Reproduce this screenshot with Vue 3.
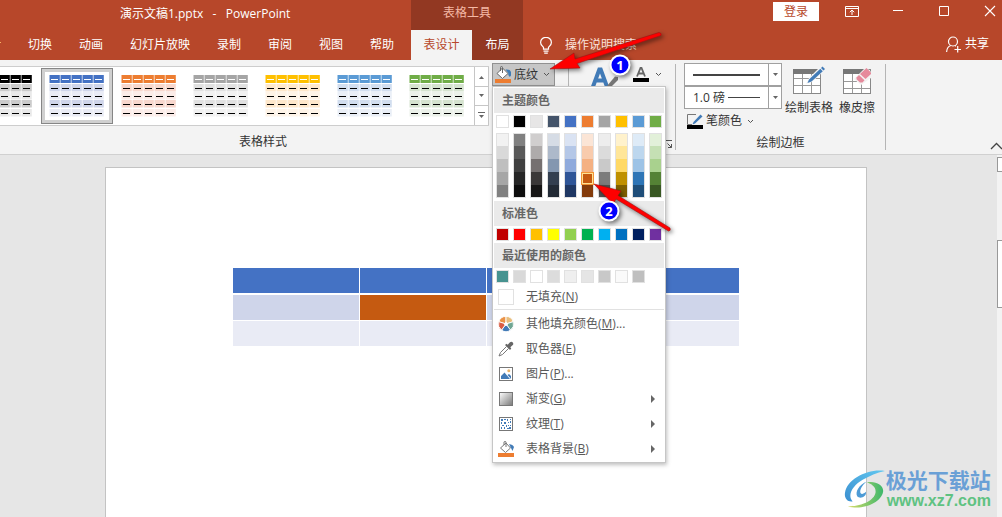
<script setup>
const tabs = ['设计', '切换', '动画', '幻灯片放映', '录制', '审阅', '视图', '帮助']

const tableStyles = [
  { name: '黑色', head: '#000000', odd: '#cbcbcb', even: '#e9e9e9' },
  { name: '蓝色', head: '#4472c4', odd: '#cfd5ea', even: '#e9ebf5', selected: true },
  { name: '橙色', head: '#ed7d31', odd: '#f8d7cd', even: '#fcece8' },
  { name: '灰色', head: '#a5a5a5', odd: '#e1e1e1', even: '#f1f1f1' },
  { name: '金色', head: '#ffc000', odd: '#ffe8cb', even: '#fff4e7' },
  { name: '浅蓝', head: '#5b9bd5', odd: '#d2deef', even: '#eaeff7' },
  { name: '绿色', head: '#70ad47', odd: '#d5e3cf', even: '#ebf1e9' },
]
const cellRows = [9, 17, 25, 34]

const themeColors = [
  { base: '#ffffff', tints: ['#f2f2f2', '#d9d9d9', '#bfbfbf', '#a6a6a6', '#808080'] },
  { base: '#000000', tints: ['#808080', '#595959', '#404040', '#262626', '#0d0d0d'] },
  { base: '#e7e6e6', tints: ['#d0cece', '#aeabab', '#757070', '#3b3838', '#171616'] },
  { base: '#44546a', tints: ['#d6dce5', '#adb9ca', '#8497b0', '#333f50', '#222a35'] },
  { base: '#4472c4', tints: ['#dae3f3', '#b4c7e7', '#8faadc', '#2f5597', '#203864'] },
  { base: '#ed7d31', tints: ['#fbe5d6', '#f8cbad', '#f4b183', '#c55a11', '#843c0c'] },
  { base: '#a5a5a5', tints: ['#ededed', '#dbdbdb', '#c9c9c9', '#7c7c7c', '#525252'] },
  { base: '#ffc000', tints: ['#fff2cc', '#ffe699', '#ffd966', '#bf9000', '#7f6000'] },
  { base: '#5b9bd5', tints: ['#deebf7', '#bdd7ee', '#9dc3e6', '#2e75b6', '#1f4e79'] },
  { base: '#70ad47', tints: ['#e2f0d9', '#c5e0b4', '#a9d18e', '#548235', '#385723'] },
]
const activeColor = '#c55a11'
const standardColors = ['#c00000', '#ff0000', '#ffc000', '#ffff00', '#92d050', '#00b050', '#00b0f0', '#0070c0', '#002060', '#7030a0']
const recentColors = ['#479390', '#d9d9d9', '#ffffff', '#dcdcdc', '#efefef', '#e5e5e5', '#c8c8c8', '#fafafa', '#bfbfbf']

const menuItems = [
  { icon: 'wheel', text: '其他填充颜色', key: 'M', tail: '...' },
  { icon: 'dropper', text: '取色器', key: 'E' },
  { icon: 'picture', text: '图片', key: 'P', tail: '...' },
  { icon: 'gradient', text: '渐变', key: 'G', sub: true },
  { icon: 'texture', text: '纹理', key: 'T', sub: true },
  { icon: 'bucket', text: '表格背景', key: 'B', sub: true },
]
</script>

<template>
  <div class="page">
    <header class="titlebar">
      <div class="main-tabs">
        <div class="doc-title">演示文稿1.pptx&nbsp;&nbsp; -&nbsp;&nbsp; PowerPoint</div>
        <nav class="tabs">
          <button v-for="t in tabs" :key="t" class="tab">{{ t }}</button>
        </nav>
      </div>
      <div class="context">
        <div class="context-title">表格工具</div>
        <nav class="context-tabs">
          <button class="tab active">表设计</button>
          <button class="tab layout-tab">布局</button>
        </nav>
      </div>
      <label class="search">
        <svg width="14" height="17" viewBox="0 0 14 17" fill="none" stroke="#fff" stroke-width="1.2">
          <path d="M4.5 12.2V10.4C3.6 8.9 1.6 8 1.6 5.4A5.2 4.9 0 0 1 12.4 5.4C12.4 8 10.4 8.9 9.5 10.4V12.2Z" />
          <path d="M4.5 14.2H9.5M5.2 16.2H8.8" />
        </svg>
        <input type="text" placeholder="操作说明搜索" aria-label="操作说明搜索" />
      </label>
      <div class="window-side">
        <div class="window-row">
          <button class="signin">登录</button>
          <button class="win" aria-label="功能区显示选项">
            <svg width="14" height="12" viewBox="0 0 14 12" fill="none" stroke="#fff">
              <path d="M.5 1.5H13.5V11.5H.5ZM.5 3.5H13.5M7 10V5M4.8 7.2L7 5L9.2 7.2" />
            </svg>
          </button>
          <button class="win" aria-label="最小化">
            <svg width="14" height="12" viewBox="0 0 14 12"><path d="M2 5.500H12" stroke="#fff" /></svg>
          </button>
          <button class="win" aria-label="最大化">
            <svg width="14" height="12" viewBox="0 0 14 12"><path d="M2.500 1.500H11.500V10.500H2.500Z" fill="none" stroke="#fff" /></svg>
          </button>
          <button class="win" aria-label="关闭">
            <svg width="14" height="12" viewBox="0 0 14 12"><path d="M2 1L12 11M12 1L2 11" stroke="#fff" stroke-width="1.1" /></svg>
          </button>
        </div>
        <button class="share">
          <svg width="16" height="17" viewBox="0 0 16 17" fill="none" stroke="#fff" stroke-width="1.2">
            <circle cx="7" cy="5.500" r="4.500" />
            <path d="M.6 16C.8 12.500 2.300 10.300 4.800 9.500M9 9.600L10 10.200M8.500 13.500H15M11.700 10V16.500" />
          </svg>
          <span>共享</span>
        </button>
      </div>
    </header>

    <section class="ribbon">
      <div class="group styles-group">
        <div class="group-body">
          <div class="gallery">
            <div class="strip">
              <button
                v-for="s in tableStyles"
                :key="s.name"
                class="style-item"
                :class="{ selected: s.selected }"
                :aria-label="s.name"
              >
                <svg width="56" height="42" viewBox="0 0 56 42">
                  <g v-for="c in 5" :key="c" :transform="`translate(${(c - 1) * 11} 0)`">
                    <rect x="0.500" y="0" width="10.300" height="8" :fill="s.head" />
                    <rect x="2" y="4" width="7" height="1" fill="#fff" />
                    <g v-for="(y, i) in cellRows" :key="y">
                      <rect x="0.500" :y="y" width="10.300" height="7.500" :fill="i % 2 ? s.even : s.odd" />
                      <rect x="2" :y="y + 4" width="7" height="1" fill="#000" />
                    </g>
                  </g>
                </svg>
              </button>
            </div>
            <div class="gallery-nav">
              <button aria-label="上一行"><svg width="7" height="4"><path d="M1 4L3.500 1L6 4Z" fill="#666" /></svg></button>
              <button aria-label="下一行"><svg width="7" height="4"><path d="M1 0L3.500 3L6 0Z" fill="#666" /></svg></button>
              <button aria-label="其他"><svg width="7" height="7"><path d="M0 .5H7" stroke="#666" /><path d="M1 3L3.500 6L6 3Z" fill="#666" /></svg></button>
            </div>
          </div>

          <div class="shading">
            <button class="shading-button">
              <svg width="17" height="17" viewBox="0 0 17 17">
                <path d="M2 7.500L7.500 2L13 7.500L7.500 12.500Z" fill="#fff" stroke="#666" />
                <path d="M5.500 5V1.500Q5.500 .5 6.500 .5T7.500 1.500V7" fill="none" stroke="#666" />
                <path d="M10.500 3.500Q15 3 16 6V9.500L14.800 11L13.300 9V7Z" fill="#3f7cb5" />
                <rect x="0" y="13" width="16" height="4" fill="#ed7d31" />
              </svg>
              <span>底纹</span>
              <svg width="7" height="5"><path d="M1 1L3.500 3.500L6 1" fill="none" stroke="#555" /></svg>
            </button>

            <div class="menu">
              <div class="menu-head">主题颜色</div>
              <div class="swatches">
                <button v-for="c in themeColors" :key="c.base" class="swatch" :style="{ background: c.base }" :aria-label="c.base"></button>
              </div>
              <div class="swatches tint-columns">
                <div v-for="c in themeColors" :key="c.base" class="tints">
                  <button
                    v-for="t in c.tints"
                    :key="t"
                    :class="{ picked: t === activeColor }"
                    :style="{ background: t }"
                    :aria-label="t"
                  ></button>
                </div>
              </div>
              <div class="menu-head">标准色</div>
              <div class="swatches">
                <button v-for="c in standardColors" :key="c" class="swatch" :style="{ background: c }" :aria-label="c"></button>
              </div>
              <div class="menu-head">最近使用的颜色</div>
              <div class="swatches">
                <button v-for="c in recentColors" :key="c" class="swatch" :style="{ background: c }" :aria-label="c"></button>
              </div>
              <button class="item no-fill">
                <span class="item-icon"><i class="blank"></i></span>
                <span>无填充(<u>N</u>)</span>
              </button>
              <div class="divider"></div>
              <button v-for="m in menuItems" :key="m.icon" class="item">
                <span class="item-icon">
                  <svg v-if="m.icon === 'wheel'" width="16" height="16" viewBox="0 0 16 16" stroke="#fff" stroke-width=".9">
                    <path d="M8 8L.8 5.700A7.600 7.600 0 0 1 8 .4Z" fill="#ea9246" />
                    <path d="M8 8V.4A7.600 7.600 0 0 1 15.200 5.700Z" fill="#e8bd7c" />
                    <path d="M8 8L15.200 5.700A7.600 7.600 0 0 1 12.500 14.100Z" fill="#6fa693" />
                    <path d="M8 8L12.500 14.100A7.600 7.600 0 0 1 3.500 14.100Z" fill="#427bb7" />
                    <path d="M8 8L3.500 14.100A7.600 7.600 0 0 1 .8 5.700Z" fill="#d95c43" />
                    <circle cx="8" cy="8" r="1.500" fill="#fff" />
                  </svg>
                  <svg v-else-if="m.icon === 'dropper'" width="16" height="16" viewBox="0 0 16 16">
                    <path d="M8.500 5.500L2.500 11.500L1 15L4.500 13.500L10.500 7.500" fill="#fff" stroke="#777" />
                    <path d="M7 4L8.500 2.700L9.700 3.700L12 1.200Q13.500 .2 14.800 1.400Q15.800 2.700 14.800 4L12.300 6.300L13.300 7.500L12 9Z" fill="#666" />
                  </svg>
                  <svg v-else-if="m.icon === 'picture'" width="16" height="16" viewBox="0 0 16 16">
                    <rect x="1.500" y="1.500" width="13" height="13" fill="#fff" stroke="#777" />
                    <path d="M3 13V10L6.500 6.500L12 13ZM9.500 9L11 8L13 10V13Z" fill="#427bb7" />
                    <circle cx="10.800" cy="4.800" r="1.500" fill="#e8b36b" />
                  </svg>
                  <svg v-else-if="m.icon === 'gradient'" width="16" height="16" viewBox="0 0 16 16">
                    <defs>
                      <linearGradient id="grey-fade" x1="0" y1="0" x2="1" y2="1">
                        <stop offset="0" stop-color="#fff" /><stop offset="1" stop-color="#777" />
                      </linearGradient>
                    </defs>
                    <rect x="1.500" y="1.500" width="13" height="13" fill="url(#grey-fade)" stroke="#777" />
                  </svg>
                  <svg v-else-if="m.icon === 'texture'" width="16" height="16" viewBox="0 0 16 16">
                    <rect x="1.500" y="1.500" width="13" height="13" fill="#fff" stroke="#777" />
                    <path d="M3 3h2v2H3zM6 3h2v1H6zM9 3h1v2H9zM12 3h1v1h-1zM3 6h1v2H3zM6 6h2v2H6zM10 6h1v1h-1zM12 5h1v2h-1zM4 9h2v1H4zM8 9h1v2H8zM3 11h1v2H3zM6 11h1v2H6zM10 9h1v1h-1zM12 9h1v1h-1zM9 12h2v1H9zM11 11h2v2h-2z" fill="#427bb7" />
                  </svg>
                  <svg v-else width="17" height="16" viewBox="0 0 17 16">
                    <path d="M2.500 7L8 2L12.500 7L7.500 11.500Z" fill="#fff" stroke="#777" />
                    <path d="M6 4V1Q6 .5 7 .5T8 1V6" fill="none" stroke="#777" />
                    <path d="M11 3Q15 3.500 16 6L14.500 10L13 7Z" fill="#427bb7" />
                    <rect x="0" y="12" width="16" height="4" fill="#ed7d31" />
                  </svg>
                </span>
                <span>{{ m.text }}(<u>{{ m.key }}</u>){{ m.tail }}</span>
                <svg v-if="m.sub" class="more" width="4" height="8"><path d="M0 0L4 4L0 8Z" fill="#666" /></svg>
              </button>
            </div>
          </div>

          <div class="rule short"></div>
          <button class="wordart" aria-label="快速样式">
            <svg width="28" height="28" viewBox="0 0 28 28">
              <path d="M1.500 22L8.300 3.500H9.700L16.500 22M4.500 14.500H13" fill="none" stroke="#427bb7" stroke-width="4" />
              <path d="M16 20L24 10.500L27 11V14L20 21Z" fill="#777" />
            </svg>
          </button>
          <button class="font-fill" aria-label="文本填充">
            <svg width="16" height="15" viewBox="0 0 16 15">
              <path d="M4 9.500L7.500 1H8.500L12 9.500M5.500 6.500H10.500" fill="none" stroke="#666" stroke-width="1.800" />
              <rect y="11" width="16" height="4" fill="#000" />
            </svg>
            <svg width="7" height="5"><path d="M1 1L3.500 3.500L6 1" fill="none" stroke="#555" /></svg>
          </button>
        </div>
        <div class="group-foot">
          <span class="styles-label">表格样式</span>
          <button class="launcher" aria-label="更多设置">
            <svg width="8" height="9" viewBox="0 0 8 9" fill="none" stroke="#555"><path d="M.5 7V.5H7M2.500 3.500L6.500 7.500M6.500 4V7.500H3" /></svg>
          </button>
        </div>
      </div>

      <div class="rule"></div>

      <div class="group draw-group">
        <div class="group-body draw-body">
          <div class="pen-column">
            <div class="combo">
              <select aria-label="笔样式"><option></option></select>
              <span class="stroke thick"></span>
              <span class="combo-arrow"><svg width="5" height="3"><path d="M0 0H5L2.500 3Z" fill="#666" /></svg></span>
            </div>
            <div class="combo">
              <select aria-label="笔划粗细"><option>1.0 磅</option></select>
              <span class="stroke thin"></span>
              <span class="combo-arrow"><svg width="5" height="3"><path d="M0 0H5L2.500 3Z" fill="#666" /></svg></span>
            </div>
            <button class="pen-color">
              <svg width="17" height="17" viewBox="0 0 17 17">
                <path d="M9 1.500H.5V11.500H5" fill="none" stroke="#777" />
                <path d="M13.500 1.500L15.500 3.500L8 10.500L5.500 11.500L6.500 9Z" fill="#427bb7" />
                <rect y="12" width="16" height="4" fill="#000" />
              </svg>
              <span>笔颜色</span>
              <svg width="7" height="5"><path d="M1 1L3.500 3.500L6 1" fill="none" stroke="#555" /></svg>
            </button>
          </div>
          <button class="big">
            <svg width="32" height="30" viewBox="0 0 32 30">
              <rect x=".5" y="3.500" width="27" height="24" fill="#fff" stroke="#888" />
              <path d="M0 3H28V8H0Z" fill="#777" />
              <path d="M1 12.500H27M1 19.500H27M9.500 8V27M18.500 8V27" stroke="#999" />
              <path d="M28 0L32 4L19 16L13 18L16 12Z" fill="#f3f3f3" />
              <path d="M29.500 .5L32 3L30.500 4.500L28 2ZM27.300 2.700L29.800 5.200L18.500 15.500L14.500 17L16 13.500Z" fill="#427bb7" />
            </svg>
            <span>绘制表格</span>
          </button>
          <button class="big eraser">
            <svg width="28" height="30" viewBox="0 0 28 30">
              <rect x=".5" y="3.500" width="27" height="24" fill="#fff" stroke="#888" />
              <path d="M0 3H22L18 8H0Z" fill="#777" />
              <path d="M1 15.500H14M1 22.500H27M9.500 8V27M18.500 18V27" stroke="#999" />
              <path d="M23 1L28 6V12L18 19L11 13Z" fill="#f3f3f3" />
              <path d="M23.500 2L28 6.500V8L22.500 13L17 8Z" fill="#e68a9c" />
              <path d="M16 9L21.500 14.300L19.500 16.500H17L13.500 13.300V11.500Z" fill="#e68a9c" />
            </svg>
            <span>橡皮擦</span>
          </button>
        </div>
        <div class="group-foot center">绘制边框</div>
      </div>

      <div class="rule"></div>
      <button class="collapse" aria-label="折叠功能区">
        <svg width="12" height="8"><path d="M1 7L6.500 1.500L12 7" fill="none" stroke="#444" stroke-width="1.300" /></svg>
      </button>
    </section>

    <main class="workspace">
      <div class="slide">
        <table class="grid">
          <thead>
            <tr><th v-for="n in 4" :key="n"></th></tr>
          </thead>
          <tbody>
            <tr class="odd"><td v-for="n in 4" :key="n" :class="{ filled: n === 2 }"></td></tr>
            <tr class="even"><td v-for="n in 4" :key="n"></td></tr>
          </tbody>
        </table>
      </div>
      <div class="scrollbar">
        <button class="scroll-up" aria-label="向上滚动"><svg width="6" height="4"><path d="M0 4L3 1L6 4Z" fill="#333" /></svg></button>
        <div class="scroll-thumb"></div>
      </div>
    </main>

    <svg class="callouts" width="146" height="214" viewBox="0 0 146 214">
      <g class="lifted">
        <path d="M10 44L34 28L35 34L119 7.500Q122 8 121 10.500L37 38.500L40 43Z" fill="#fe0000" stroke="#a01010" stroke-width=".6" />
        <path d="M54 159L81 166L78 170.500L130 203Q131 206 128.500 206L76 174L73 179Z" fill="#fe0000" stroke="#a01010" stroke-width=".6" />
        <circle cx="80" cy="40" r="10.500" fill="#fff" />
        <circle cx="69" cy="186" r="10.500" fill="#fff" />
      </g>
      <circle cx="80" cy="40" r="8.500" fill="#0000fe" />
      <circle cx="69" cy="186" r="8.500" fill="#0000fe" />
      <text x="80" y="45">1</text>
      <text x="69" y="191">2</text>
    </svg>

    <div class="brand">
      <svg width="42" height="40" viewBox="0 0 44 42">
        <defs>
          <linearGradient id="sky" x1="0" y1="1" x2="1" y2="0">
            <stop offset="0" stop-color="#3b8fd0" /><stop offset="1" stop-color="#62c8f0" />
          </linearGradient>
          <linearGradient id="leaf" x1="0" y1="0" x2="1" y2="0">
            <stop offset="0" stop-color="#d8dc68" /><stop offset="1" stop-color="#3cb76b" />
          </linearGradient>
        </defs>
        <path d="M43 2C26-1 3 10 1 25C0 31 4 35 9 34C3 28 9 17 20 11C27 7 34 4 43 2Z" fill="url(#sky)" />
        <path d="M24 13C16 16 11 24 14 29C17 32 24 29 23 24C20 27 17 27 17 24C17 20 20 16 24 13Z" fill="#4d9bd6" />
        <path d="M24 14C33 12 42 17 41 24C39 36 18 44 4 39C17 40 32 33 33 25C34 19 29 16 24 14Z" fill="url(#leaf)" />
      </svg>
      <div class="brand-text">
        <strong>极光下载站</strong>
        <span>www.xz7.com</span>
      </div>
    </div>
  </div>
</template>

<style>
body {
  margin: 0;
}
</style>

<style scoped>
.page {
  position: relative;
  display: flex;
  flex-direction: column;
  min-height: 100vh;
  overflow: hidden;
  background: #e6e6e6;
  font: 12px/16px "Open Sans", "Noto Sans CJK SC", sans-serif;
  color: #333;
}
button, input, select {
  margin: 0;
  padding: 0;
  border: 0;
  border-radius: 0;
  background: none;
  font: inherit;
  color: inherit;
  white-space: nowrap;
}
svg {
  display: block;
  flex: none;
}

.titlebar {
  display: flex;
  height: 60px;
  background: #b7472a;
  color: #fff;
}
.main-tabs {
  width: 411px;
  flex: none;
  overflow: hidden;
}
.doc-title {
  height: 30px;
  padding-left: 120px;
  line-height: 28px;
}
.tabs {
  display: flex;
  justify-content: flex-end;
  gap: 27px;
  height: 30px;
  padding-right: 17px;
}
.context {
  width: 112px;
  flex: none;
  background: #923822;
}
.context-title {
  height: 30px;
  line-height: 26px;
  text-align: center;
  color: #f5b9a5;
}
.context-tabs {
  display: flex;
  height: 30px;
}
.tab.active {
  width: 61px;
  background: #f3f3f3;
  color: #b7472a;
}
.layout-tab {
  flex: 1;
}
.search {
  display: flex;
  align-items: center;
  align-self: flex-end;
  gap: 12px;
  height: 30px;
  margin-left: 16px;
}
.search input {
  width: 84px;
  outline: 0;
}
.search input::placeholder {
  color: #fbe3dc;
  opacity: 1;
}
.window-side {
  display: flex;
  flex-direction: column;
  align-items: flex-end;
  margin-left: auto;
}
.window-row {
  display: flex;
  gap: 32px;
  height: 30px;
  padding-right: 5px;
}
.signin {
  width: 46px;
  height: 19px;
  margin: 2px -6px 0 0;
  background: #fff;
  color: #b7472a;
}
.win {
  width: 14px;
  height: 22px;
}
.share {
  display: flex;
  align-items: center;
  gap: 3px;
  height: 28px;
  padding-right: 13px;
}

.ribbon {
  display: flex;
  height: 94px;
  background: #f3f3f3;
  border-bottom: 1px solid #d0d0d0;
}
.group {
  display: flex;
  flex-direction: column;
  flex: none;
}
.styles-group {
  width: 675px;
}
.draw-group {
  width: 209px;
}
.group-body {
  display: flex;
  align-items: flex-start;
  height: 72px;
}
.group-foot {
  display: flex;
  align-items: center;
  height: 24px;
}
.group-foot.center {
  justify-content: center;
}
.styles-label {
  margin-left: 239px;
}
.launcher {
  margin: 4px 2px 0 auto;
}
.rule {
  width: 1px;
  height: 86px;
  margin-top: 4px;
  background: #b5b5b5;
}
.rule.short {
  height: 60px;
  margin-left: 13px;
}
.gallery {
  display: flex;
  width: 489px;
  height: 58px;
  margin-top: 6px;
  border: solid #cdcdcd;
  border-width: 1px 0;
  background: #fff;
  overflow: hidden;
}
.strip {
  display: flex;
  align-items: center;
  flex: 1;
  margin-left: -31px;
}
.style-item {
  display: flex;
  align-items: center;
  justify-content: center;
  width: 72px;
  height: 56px;
  flex: none;
}
.style-item.selected {
  border: 1px solid #868686;
  box-shadow: inset 0 0 0 3px #d0d0d0;
}
.gallery-nav {
  display: grid;
  grid-template-rows: 20px 19px 19px;
  width: 15px;
  flex: none;
}
.gallery-nav button {
  display: flex;
  align-items: center;
  justify-content: center;
  border: solid #c6c6c6;
  border-width: 0 1px 1px;
}
.gallery-nav button:last-child {
  border-bottom: 0;
}
.shading {
  position: relative;
  margin: 3px 0 0 3px;
}
.shading-button {
  display: flex;
  align-items: center;
  width: 63px;
  height: 23px;
  padding-left: 2px;
  border: 1px solid #919191;
  background: #c6c6c6;
}
.shading-button span {
  margin: 0 5px 0 2px;
}
.wordart {
  margin: 6px 0 0 22px;
}
.font-fill {
  display: flex;
  align-items: center;
  gap: 6px;
  margin: 7px 0 0 14px;
}

.menu {
  position: absolute;
  z-index: 2;
  top: 23px;
  left: 0;
  width: 170px;
  padding: 1px;
  border: 1px solid #c6c6c6;
  background: #fff;
  box-shadow: 1px 2px 4px rgba(0, 0, 0, 0.25);
  color: #595959;
}
.menu-head {
  height: 25px;
  padding-left: 8px;
  background: #eaeaea;
  color: #666;
  line-height: 25px;
  font-weight: 600;
}
.swatches {
  display: flex;
  gap: 4px;
  padding: 2px;
}
.swatch {
  width: 13px;
  height: 13px;
  border: 1px solid #e1e1e1;
}
.tint-columns {
  padding-top: 3px;
  padding-bottom: 3px;
}
.tints {
  display: grid;
  grid-template-rows: repeat(5, 13px);
  width: 13px;
}
.tints button {
  border: solid #e1e1e1;
  border-width: 0 1px;
}
.tints button:first-child {
  border-top-width: 1px;
}
.tints button:last-child {
  border-bottom-width: 1px;
}
.tints .picked {
  border: 1px solid #f29436;
  box-shadow: inset 0 0 0 1px #ffe294;
}
.item {
  display: flex;
  align-items: center;
  width: 100%;
  height: 25px;
  padding: 0 9px 0 4px;
  text-align: left;
}
.no-fill {
  margin-top: -1px;
}
.item-icon {
  width: 28px;
}
.blank {
  display: block;
  width: 14px;
  height: 14px;
  border: 1px solid #e1e1e1;
}
.more {
  margin-left: auto;
}
.divider {
  height: 1px;
  margin-bottom: 1px;
  background: #e1e1e1;
}

.draw-body {
  gap: 3px;
  padding-left: 8px;
}
.pen-column {
  width: 98px;
  margin-top: 3px;
}
.combo {
  position: relative;
  display: flex;
  align-items: center;
  height: 21px;
  border: 1px solid #a0a0a0;
  background: #fff;
}
.combo select {
  width: 100%;
  height: 21px;
  padding-left: 8px;
  appearance: none;
}
.stroke {
  position: absolute;
  right: 21px;
  background: #444;
}
.thick {
  left: 8px;
  height: 2px;
}
.thin {
  left: 43px;
  height: 1px;
}
.combo-arrow {
  position: absolute;
  right: 0;
  display: flex;
  align-items: center;
  justify-content: center;
  width: 12px;
  height: 21px;
  border-left: 1px solid #a0a0a0;
  pointer-events: none;
}
.pen-color {
  display: flex;
  align-items: center;
  height: 24px;
  padding-left: 3px;
}
.pen-color span {
  margin: 0 5px 0 2px;
}
.big {
  display: flex;
  flex-direction: column;
  align-items: center;
  width: 48px;
  margin-top: 6px;
}
.big span {
  margin-top: 4px;
}
.eraser {
  width: 42px;
}
.collapse {
  align-self: flex-end;
  margin: 0 0 4px auto;
}

.workspace {
  display: flex;
  flex: 1;
}
.slide {
  flex: 1;
  margin: 12px 130px 0 105px;
  padding: 100px 127px 0 127px;
  border: solid #c3c3c3;
  border-width: 1px 1px 0;
  background: #fff;
}
.grid {
  width: 100%;
  table-layout: fixed;
  border-collapse: collapse;
}
.grid th, .grid td {
  height: 25px;
  padding: 0;
  border: solid #fff;
  border-width: 0 0 1px 1px;
}
.grid th:first-child, .grid td:first-child {
  border-left: 0;
}
.grid th {
  background: #4472c4;
  border-bottom-width: 2px;
}
.odd td {
  background: #cfd5ea;
}
.even td {
  background: #e9ebf5;
}
.odd .filled {
  background: #c55a11;
}
.scrollbar {
  width: 5px;
  overflow: hidden;
  background: #f3f3f3;
}
.scroll-up, .scroll-thumb {
  display: flex;
  align-items: center;
  justify-content: center;
  box-sizing: border-box;
  width: 15px;
  height: 15px;
  border: 1px solid #999;
  background: #fff;
}
.scroll-up {
  margin-top: 2px;
}
.scroll-thumb {
  height: 68px;
  margin-top: 68px;
}

.callouts {
  position: absolute;
  z-index: 3;
  top: 25px;
  left: 540px;
  pointer-events: none;
}
.callouts text {
  fill: #fff;
  font: bold 13px "Open Sans", sans-serif;
  text-anchor: middle;
}
.lifted {
  filter: drop-shadow(2px 2px 2px rgba(0, 0, 0, 0.5));
}
.brand {
  position: absolute;
  right: 11px;
  bottom: 7px;
  display: flex;
  align-items: center;
}
.brand-text {
  display: flex;
  flex-direction: column;
}
.brand strong {
  color: #6aa0d6;
  font: bold 21px/25px "Noto Sans CJK SC", sans-serif;
}
.brand-text span {
  padding-left: 1px;
  color: #5fc282;
  font: bold 16px/18px "Liberation Sans", sans-serif;
}
</style>
